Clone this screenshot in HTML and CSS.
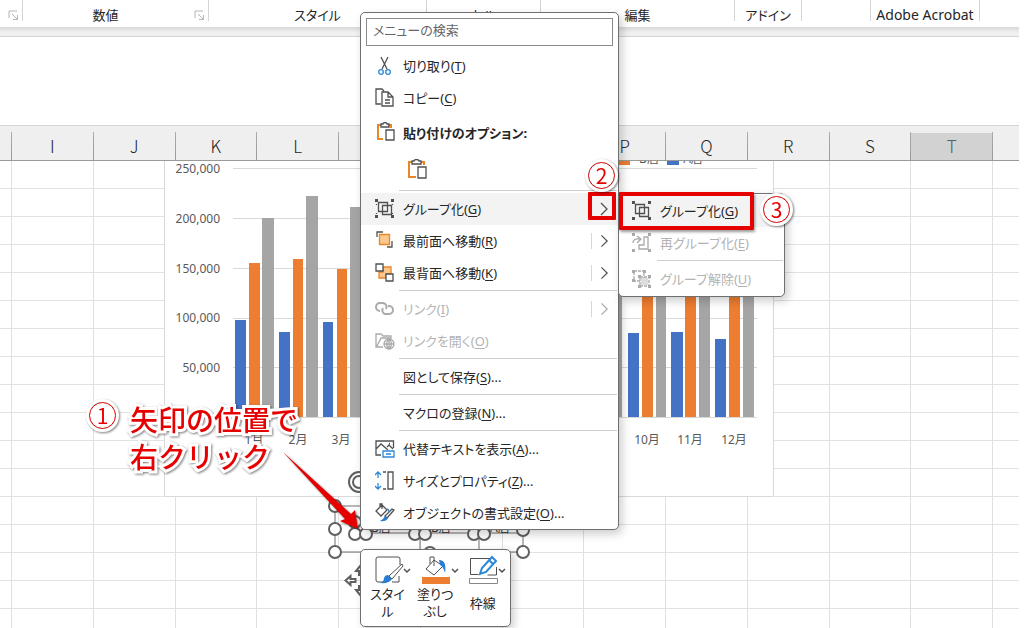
FILE: index.html
```html
<!DOCTYPE html>
<html lang="ja">
<head>
<meta charset="utf-8">
<title>グループ化</title>
<link rel="stylesheet" href="styles.css">
</head>
<body>
<div class="screen">
  <header class="ribbon">
    <div class="section"><svg class="launcher" viewBox="0 0 11 11"><path d="M1 8V1h8M4 4l5 5M9.500 5v4.500H5"/></svg></div>
    <div class="section number">数値<svg class="launcher" viewBox="0 0 11 11"><path d="M1 8V1h8M4 4l5 5M9.500 5v4.500H5"/></svg></div>
    <div class="section">スタイル</div>
    <div class="section">セル</div>
    <div class="section">編集</div>
    <div class="section">アドイン</div>
    <div class="section"></div>
    <div class="section latin">Adobe Acrobat</div>
    <div class="section last"></div>
  </header>
  <div class="ribbon-edge"></div>
  <div class="blank-strip"></div>

  <main class="sheet">
    <div class="col"><div class="head"></div></div>
    <div class="col"><div class="head">I</div></div>
    <div class="col"><div class="head">J</div></div>
    <div class="col"><div class="head">K</div></div>
    <div class="col"><div class="head">L</div></div>
    <div class="col"><div class="head">M</div></div>
    <div class="col"><div class="head">N</div></div>
    <div class="col"><div class="head">O</div></div>
    <div class="col"><div class="head">P</div></div>
    <div class="col"><div class="head">Q</div></div>
    <div class="col"><div class="head">R</div></div>
    <div class="col"><div class="head">S</div></div>
    <div class="col"><div class="head selected">T</div></div>
    <div class="col end"><div class="head"></div></div>
  </main>

  <svg class="chart" viewBox="164 161 610 336" role="img" aria-label="月別売上グラフ">
    <path class="frame" d="M164.500 161V496.500H773.500V161"/>
    <path class="lines" d="M233 168.500H757M233 218.500H757M233 268.500H757M233 318.500H757M233 367.500H757M233 417.500H757"/>
    <g class="blue"><path d="M235 320h11v97h-11zM279 332h11v85h-11zM323 322h10v95h-10zM628 333h11v84h-11zM671 332h12v85h-12zM715 339h11v78h-11zM667 150h12v15h-12z"/></g>
    <g class="orange"><path d="M249 263h11v154h-11zM293 259h10v158h-10zM337 269h10v148h-10zM642 240h11v177h-11zM685 240h11v177h-11zM729 240h11v177h-11zM619 150h11v15h-11z"/></g>
    <g class="gray"><path d="M262 218h12v199h-12zM306 196h12v221h-12zM350 207h11v210h-11zM612 240h10v177h-10zM656 240h10v177h-10zM699 240h11v177h-11zM743 240h11v177h-11z"/></g>
    <g class="axis">
      <text x="220" y="173">250,000</text><text x="220" y="223">200,000</text><text x="220" y="273">150,000</text><text x="220" y="322">100,000</text><text x="220" y="372">50,000</text>
    </g>
    <g class="months">
      <text x="254" y="444">1月</text><text x="298" y="444">2月</text><text x="341" y="444">3月</text><text x="647" y="444">10月</text><text x="690" y="444">11月</text><text x="734" y="444">12月</text>
      <text x="649" y="163">B店</text><text x="693" y="163">A店</text>
    </g>
  </svg>

  <svg class="handles" viewBox="320 465 220 140">
    <path d="M335 506H523V552H335zM360 533H523M420 533V552M479 533V552"/>
    <g class="shape-text"><text x="371" y="532">B店</text><text x="431" y="532">B店</text><text x="490" y="532">A店</text></g>
    <g class="knobs">
      <circle cx="359" cy="482" r="10"/><circle cx="359" cy="482" r="6"/>
      <circle cx="335" cy="506" r="6"/><circle cx="335" cy="529" r="6"/><circle cx="335" cy="552" r="6"/>
      <circle cx="355" cy="522" r="6"/><circle cx="355" cy="534" r="6"/><circle cx="366" cy="534" r="6"/>
      <circle cx="415" cy="534" r="6"/><circle cx="425" cy="534" r="6"/><circle cx="474" cy="534" r="6"/><circle cx="484" cy="534" r="6"/>
      <circle cx="523" cy="530" r="6"/><circle cx="523" cy="552" r="6"/><circle cx="430" cy="553" r="6"/>
    </g>
    <path class="move" d="M345.500 580.500l5-4.500v3h5v3h-5v3zM361 565l-5 6h3v4h4M361 596l-5-6h3v-4h4"/>
  </svg>

  <nav class="menu main-menu" aria-label="コンテキストメニュー">
    <input class="search" type="text" placeholder="メニューの検索" aria-label="メニューの検索">
    <button class="item"><svg viewBox="0 0 20 20"><path d="M6 1l6 12M13 1L7 13"/><g class="accent"><circle cx="6" cy="16" r="2.300"/><circle cx="13" cy="16" r="2.300"/></g></svg><span>切り取り(<u>T</u>)</span></button>
    <button class="item"><svg viewBox="0 0 20 20"><path d="M6 16H1V1h6l2 2M7 4h6l5 5v9H7zM13 4v5h5M10 12h5M10 15h5"/></svg><span>コピー(<u>C</u>)</span></button>
    <div class="item heading"><svg viewBox="0 0 20 20"><path class="warm" d="M8 17H3V3h3M13 3h3v3"/><path d="M6 5V2h2c0-2 4-2 4 0h2v3zM11 8h8v10h-8z"/></svg><span>貼り付けのオプション:</span></div>
    <div class="paste"><button aria-label="貼り付け"><svg viewBox="0 0 20 20"><path class="warm" d="M9 18H2V3h3M14 3h3v3"/><path d="M5 5V2h2c0-2 5-2 5 0h2v3zM11 8h8v11h-8z"/></svg></button></div>
    <hr>
    <button class="item active"><svg viewBox="0 0 20 20"><path d="M3.500 3.500h9v9h-9zM7.500 6.500h9v9h-9z"/><path d="M1.500 5v10M17.500 5v10" stroke-dasharray="1 8"/><path class="dots" d="M0 0h3v3H0zM16 0h3v3h-3zM0 16h3v3H0zM16 16h3v3h-3z"/></svg><span>グループ化(<u>G</u>)</span><svg class="more" viewBox="0 0 19 16"><path d="M10 2l6 6-6 6"/></svg></button>
    <button class="item"><svg viewBox="0 0 20 20"><path d="M2 6V1h6M12 16h5v-6"/><path class="box" d="M4.500 3.500h10v10h-10z"/></svg><span>最前面へ移動(<u>R</u>)</span><svg class="more split" viewBox="0 0 19 16"><path d="M10 2l6 6-6 6"/></svg></button>
    <button class="item"><svg viewBox="0 0 20 20"><path class="box" d="M8 4h8v7h-5v4H4V9h4z"/><path class="plain" d="M1 1h7v7H1zM11 11h7v7h-7z"/></svg><span>最背面へ移動(<u>K</u>)</span><svg class="more split" viewBox="0 0 19 16"><path d="M10 2l6 6-6 6"/></svg></button>
    <hr>
    <button class="item" disabled><svg viewBox="0 0 20 20"><path class="thick" d="M5 12a4 4 0 1 1 0-8h3a4 4 0 0 1 3 6M13 7h1a4 4 0 1 1 0 8h-4a4 4 0 0 1-2-6"/></svg><span>リンク(<u>I</u>)</span><svg class="more split" viewBox="0 0 19 16"><path d="M10 2l6 6-6 6"/></svg></button>
    <button class="item" disabled><svg viewBox="0 0 20 20"><path d="M8 16H1V3h5l2 2h8v2H6L2 15"/><circle class="plain" cx="14" cy="13" r="5"/><path d="M9 13h10M14 8v10M14 8q-5 5 0 10M14 8q5 5 0 10"/></svg><span>リンクを開く(<u>O</u>)</span></button>
    <hr>
    <button class="item"><svg viewBox="0 0 20 20"></svg><span>図として保存(<u>S</u>)...</span></button>
    <hr>
    <button class="item"><svg viewBox="0 0 20 20"></svg><span>マクロの登録(<u>N</u>)...</span></button>
    <hr>
    <button class="item"><svg viewBox="0 0 20 20"><path d="M6 16H1V2h17.500v7M1 10l5-5 7 6M12 8l2-2 4 4M14 4.500h1"/><path class="accent" d="M8 12h11v6H8zM11 15h5"/></svg><span>代替テキストを表示(<u>A</u>)...</span></button>
    <button class="item"><svg viewBox="0 0 20 20"><path class="accent" d="M3 1v6M3 12v6M0 4l3-3 3 3M0 15l3 3 3-3"/><path d="M13 1h5v17h-5zM8 1h3M8 18h3"/></svg><span>サイズとプロパティ(<u>Z</u>)...</span></button>
    <button class="item"><svg viewBox="0 0 20 20"><path d="M7 2L1 8l5 5 6-6zM5 4V1h2v5M19 7l-7 8-2-2 7-7z"/><path class="blue-fill" d="M12 5q3 1 2 5zM10 13l3 2q-2 4-8 3 3-1 5-5"/></svg><span>オブジェクトの書式設定(<u>O</u>)...</span></button>
  </nav>

  <nav class="menu sub-menu" aria-label="グループ化">
    <button class="item active"><svg viewBox="0 0 20 20"><path d="M3.500 3.500h9v9h-9zM7.500 6.500h9v9h-9z"/><path class="dots" d="M0 0h3v3H0zM16 0h3v3h-3zM0 16h3v3H0zM16 16h3v3h-3z"/></svg><span>グループ化(<u>G</u>)</span></button>
    <button class="item" disabled><svg viewBox="0 0 20 20"><path d="M1 10q0-5 7-4M5 3l4 3-4 4M12 4h4v12H7v-4h5z"/><path class="dots" d="M0 0h3v3H0zM16 0h3v3h-3zM0 16h3v3H0zM16 16h3v3h-3z"/></svg><span>再グループ化(<u>E</u>)</span></button>
    <hr>
    <button class="item" disabled><svg viewBox="0 0 20 20"><path d="M2 2h10v10H2zM8 8h9v9H8z" stroke-dasharray="3 1"/><path class="shade" d="M9 9h7v7H9z"/><path class="dots" d="M0 1h3v3H0zM11 1h3v3h-3zM0 10h3v3H0zM6 6h3v3H6zM16 6h3v3h-3zM6 16h3v3H6zM16 16h3v3h-3z"/></svg><span>グループ解除(<u>U</u>)</span></button>
  </nav>

  <div class="mini-bar">
    <button class="tool"><svg viewBox="0 0 47 34"><path d="M36 13V7q0-2-2-2H14q-2 0-2 2v21q0 2 2 2h6M35 24v6h-7" fill="none"/><path d="M38 12L25 24l3 3 11-13z" fill="#fff"/><path class="blue-fill" d="M24 23l4 4q-3 5-12 4 4-1 4-5 1-3 4-3"/><path class="chev" d="M40 17l3 3 3-3"/></svg><span>スタイ<br>ル</span></button>
    <button class="tool"><svg viewBox="0 0 47 34"><path d="M22 8l-8 9 8 6 9-9zM18 12V5h4v9" fill="none"/><path class="blue-fill" d="M27 8q8 0 6 13-2-7-5-8z"/><path class="orange" d="M10 25h28v7H10z"/><path class="chev" d="M40 17l3 3 3-3"/></svg><span>塗りつ<br>ぶし</span></button>
    <button class="tool"><svg viewBox="0 0 47 34"><path d="M31 6.500H11.500v16h8M37.500 15v8h-9" fill="none"/><path class="swatch" d="M10.500 26.500h28v5h-28z"/><path class="accent" d="M21 22l2-6L33 5l4 4-10 11zM30 8l4 4"/><path class="chev" d="M40 17l3 3 3-3"/></svg><span>枠線</span></button>
  </div>

  <p class="callout">矢印の位置で<br>右クリック</p>
  <svg class="arrow" viewBox="280 448 84 84"><path d="M283 452L351 514 355 510 358 529 340 521 345 519z"/></svg>
  <div class="mark one">1</div>
  <div class="box-mark chevron-box"></div>
  <div class="box-mark group-box"></div>
  <div class="mark two">2</div>
  <div class="mark three">3</div>
</div>
</body>
</html>
```
FILE: styles.css
```css
* { box-sizing: border-box; }
body {
  margin: 0;
  background: #fff;
  color: #262626;
  font-family: "Noto Sans", "Noto Sans CJK JP", sans-serif;
  font-size: 14px;
  font-feature-settings: "palt";
}
button, input { font: inherit; color: inherit; font-feature-settings: inherit; }
svg { display: block; }

.screen {
  position: relative;
  display: flex;
  flex-direction: column;
  min-height: 100vh;
  padding-right: 5px;
  overflow: hidden;
}

/* Ribbon */
.ribbon {
  display: grid;
  grid-template-columns: 23fr 186fr 218fr 114fr 194fr 67fr 69fr 109fr 39fr;
  height: 27px;
  padding-bottom: 6px;
}
.section {
  position: relative;
  display: flex;
  align-items: flex-end;
  justify-content: center;
  border-right: 1px solid #d4d4d4;
  font-family: "Noto Sans CJK JP", sans-serif;
  font-size: 13px;
  line-height: 12px;
  white-space: nowrap;
}
.section.number { padding-right: 20px; }
.section.latin { font-family: "Noto Sans", sans-serif; font-size: 14px; }
.section.last { border: 0; }
.launcher {
  position: absolute;
  right: 3px;
  bottom: 0;
  width: 11px;
  height: 11px;
  fill: none;
  stroke: #b5b5b5;
}
.ribbon-edge {
  height: 10px;
  background: linear-gradient(#d8d8d8, #f0f0f0 60%);
  border-bottom: 1px solid #d6d6d6;
}
.blank-strip { height: 88px; }

/* Worksheet */
.sheet {
  display: grid;
  grid-template-columns: 12px repeat(12, 1fr) 26px;
  flex: 1;
  border-top: 1px solid #d4d4d4;
}
.col {
  border-right: 1px solid #e0e0e0;
  background: repeating-linear-gradient(#fff 0 27px, #e2e2e2 27px 28px) 0 35px no-repeat;
}
.head {
  display: flex;
  align-items: center;
  justify-content: center;
  height: 35px;
  margin-right: -1px;
  padding-top: 6px;
  background: #efefef;
  border-image: linear-gradient(#efefef 20%, #aaa 21%, #999) 1;
  border-style: solid;
  border-width: 0 1px 1px 0;
  font-family: "Noto Sans CJK JP", sans-serif;
  font-weight: 300;
  font-size: 17px;
  line-height: 28px;
}
.head.selected {
  background: linear-gradient(#efefef 0 7px, #d2d2d2 7px);
  color: #45636b;
}
.col.end { border: 0; }
.col.end .head { border-right-width: 0; margin-right: 0; }

/* Chart on the sheet */
.chart {
  position: absolute;
  left: 164px;
  top: 161px;
  width: 610px;
  height: 336px;
  background: #fff;
  font-size: 12px;
  fill: #595959;
}
.frame, .lines { fill: none; stroke: #d9d9d9; }
.blue { fill: #4472c4; }
.orange { fill: #ed7d31; stroke: none; }
.gray { fill: #a5a5a5; }
.axis { text-anchor: end; }
.months { text-anchor: middle; }
.handles {
  position: absolute;
  left: 320px;
  top: 465px;
  width: 220px;
  height: 140px;
  fill: none;
  stroke: #707070;
}
.knobs { fill: #fff; stroke: #606060; stroke-width: 2; }
.move { fill: #fff; stroke: #606060; stroke-width: 2; }
.shape-text { fill: #333; stroke: none; font-size: 12px; }

/* Menus */
.menu {
  position: absolute;
  display: flex;
  flex-direction: column;
  background: #fff;
  border: 1px solid #6f6f6f;
  border-radius: 5px;
  box-shadow: 3px 4px 10px rgba(0, 0, 0, .2);
  font-size: 13px;
}
.main-menu { left: 360px; top: 12px; width: 259px; padding-top: 5px; }
.sub-menu { left: 618px; top: 193px; width: 167px; padding: 1px 0; }
.search {
  height: 28px;
  margin: 0 5px 4px;
  padding: 0 6px 4px;
  border: 1px solid #8a8a8a;
  background: #fff;
}
.search::placeholder { color: #666; opacity: 1; }
.item {
  display: flex;
  align-items: center;
  gap: 8px;
  height: 32px;
  padding: 0 8px 0 14px;
  border: 0;
  background: none;
  text-align: left;
  line-height: 20px;
  white-space: nowrap;
}
.sub-menu .item { padding-left: 13px; }
.item.active { background: #f3f3f3; }
.item.heading { height: 36px; font-weight: 700; }
.item span { padding-bottom: 1px; }
.item.heading span { padding: 2px 0 0; }
.item svg, .paste svg {
  flex: none;
  width: 20px;
  height: 20px;
  fill: none;
  stroke: #505050;
  stroke-width: 1.3;
}
.item:disabled { color: #b3b3b3; }
.item:disabled svg { stroke: #aaa; }
.item u { text-underline-offset: 2px; }
.item .thick { stroke-width: 2; }
.item .dots { fill: #505050; stroke: none; }
.item:disabled .dots { fill: #aaa; }
.item .plain { fill: #fff; }
.item .shade { fill: #ddd; stroke: none; }
.menu .warm { stroke: #e8862a; stroke-width: 2; }
.menu .box { fill: #fbc98e; stroke: #e8862a; }
.accent { stroke: #2b88d8; }
.blue-fill { fill: #2b7cd3; stroke: none; }
.paste { height: 39px; padding: 9px 0 0 46px; }
.paste button { padding: 0; border: 0; background: none; }
hr {
  width: calc(100% - 39px);
  height: 1px;
  margin: 1px 0 2px 38px;
  border: 0;
  background: #cfcfcf;
}
.item .more {
  width: 19px;
  height: 16px;
  margin-left: auto;
}
.item .more.split { border-left: 1px solid #d6d6d6; }

/* Floating format bar */
.mini-bar {
  position: absolute;
  left: 360px;
  top: 549px;
  display: flex;
  width: 151px;
  height: 78px;
  padding: 2px 3px;
  background: #fff;
  border: 1px solid #6f6f6f;
  border-radius: 5px;
  box-shadow: 3px 3px 8px rgba(0, 0, 0, .2);
}
.tool {
  display: flex;
  flex-direction: column;
  flex: 1;
  padding: 0;
  border: 0;
  background: none;
  font-size: 13px;
  line-height: 17px;
}
.tool svg { width: 47px; height: 34px; stroke: #505050; }
.tool .accent { fill: #fff; stroke-width: 2; }
.tool .chev { fill: none; stroke-width: 1.5; }
.tool .swatch { fill: #fff; stroke: #888; }
.tool .orange, .tool .blue-fill { stroke: none; }
.tool span {
  display: grid;
  place-content: center;
  width: 47px;
  height: 34px;
}

/* Step annotations */
.callout {
  position: absolute;
  left: 130px;
  top: 401px;
  margin: 0;
  color: #e60000;
  font-family: "Noto Sans CJK JP", sans-serif;
  font-size: 28px;
  font-weight: 500;
  font-feature-settings: normal;
  line-height: 37px;
  white-space: nowrap;
  -webkit-text-stroke: 6px #fff;
  paint-order: stroke fill;
  filter: drop-shadow(1px 1px 1px rgba(0, 0, 0, .5));
}
.arrow {
  position: absolute;
  left: 280px;
  top: 448px;
  width: 84px;
  height: 84px;
  fill: #e60000;
  filter: drop-shadow(1px 1px 1px rgba(0, 0, 0, .5));
}
.mark {
  position: absolute;
  display: flex;
  align-items: center;
  justify-content: center;
  width: 27px;
  height: 27px;
  border: 1px solid #e60000;
  border-radius: 50%;
  outline: 3px solid #fff;
  background: #fff;
  color: #e60000;
  font-family: "Noto Sans CJK JP", sans-serif;
  font-size: 21px;
  line-height: 21px;
  filter: drop-shadow(1px 1px 1px rgba(0, 0, 0, .5));
}
.one { left: 89px; top: 402px; }
.two { left: 588px; top: 162px; }
.three { left: 763px; top: 196px; }
.box-mark {
  position: absolute;
  border: 4px solid #e60000;
  border-radius: 1px;
}
.chevron-box { left: 588px; top: 192px; width: 28px; height: 28px; }
.group-box {
  left: 619px;
  top: 192px;
  width: 135px;
  height: 38px;
  box-shadow: 1px 2px 3px rgba(0, 0, 0, .4);
}
```
